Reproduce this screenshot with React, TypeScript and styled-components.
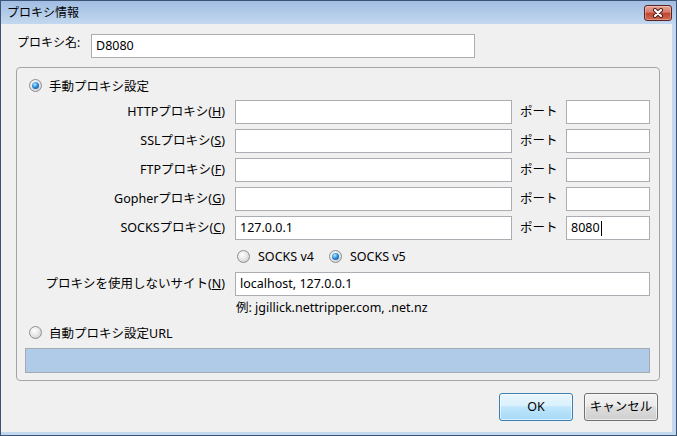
import React from 'react';
import styled, { createGlobalStyle } from 'styled-components';

const GlobalStyle = createGlobalStyle`
  body {
    margin: 0;
    background: #ffffff;
    font-family: "Noto Sans", "Noto Sans CJK JP", sans-serif;
    font-size: 12.5px;
    color: #000000;
  }
`;

const Window = styled.div`
  width: 677px;
  height: 436px;
  box-sizing: border-box;
  border: 1px solid #3b5475;
  background: #c3d8ef;
  display: flex;
  flex-direction: column;
  overflow: hidden;
`;

const TitleBar = styled.div`
  height: 23px;
  flex: none;
  display: flex;
  align-items: flex-start;
  justify-content: space-between;
  padding: 4px 4px 0 6px;
  box-sizing: border-box;
  background: linear-gradient(#a1bde2, #c3d8ef);
`;

const TitleText = styled.span`
  line-height: 16px;
  font-size: 12px;
`;

const CloseButton = styled.div`
  width: 28px;
  height: 16px;
  box-sizing: border-box;
  border: 1px solid #5b2222;
  border-radius: 3px;
  background: linear-gradient(#e7a597 0%, #d4796a 45%, #c04630 52%, #cf6a55 100%);
  box-shadow: inset 0 0 0 1px rgba(255, 255, 255, 0.3);
  display: flex;
  align-items: center;
  justify-content: center;
`;

const Client = styled.div`
  flex: 1;
  margin: 0 4px 3px 0;
  background: #f0f0f0;
  display: flex;
  flex-direction: column;
`;

const NameRow = styled.div`
  display: flex;
  align-items: flex-start;
  padding: 10px 0 0 16px;
`;

const NameLabel = styled.span`
  width: 74px;
  line-height: 17px;
  font-size: 12px;
`;

const TextBox = styled.div<{ $width?: number }>`
  width: ${({ $width }) => ($width ? `${$width}px` : 'auto')};
  height: 24px;
  box-sizing: border-box;
  border: 1px solid #abadb3;
  background: #ffffff;
  padding: 0 4px;
  display: flex;
  align-items: center;
  line-height: 16px;
  white-space: nowrap;
`;

const Caret = styled.span`
  display: inline-block;
  width: 1px;
  height: 15px;
  background: #000000;
  margin-left: 1px;
`;

const GroupBox = styled.div`
  margin: 9px 0 0 15px;
  width: 644px;
  height: 314px;
  box-sizing: border-box;
  border: 1px solid #a5a5a5;
  border-radius: 4px;
  padding-top: 8px;
  display: flex;
  flex-direction: column;
`;

const RadioRow = styled.label<{ $indent: number; $top?: number }>`
  display: flex;
  align-items: center;
  gap: 7px;
  height: 18px;
  padding-left: ${({ $indent }) => $indent}px;
  margin-top: ${({ $top }) => $top ?? 0}px;
`;

const RadioDot = styled.span<{ $checked?: boolean }>`
  width: 13px;
  height: 13px;
  flex: none;
  box-sizing: border-box;
  border-radius: 50%;
  border: 1px solid #8d8f91;
  background: radial-gradient(circle at 40% 35%, #ffffff 0%, #e6e6e6 50%, #c2c2c2 100%);
  display: inline-flex;
  align-items: center;
  justify-content: center;

  &::after {
    content: '';
    width: 7px;
    height: 7px;
    border-radius: 50%;
    background: ${({ $checked }) =>
      $checked
        ? 'radial-gradient(circle at 40% 35%, #b8ecff 0%, #2f8fdc 45%, #0b3c7a 100%)'
        : 'transparent'};
  }
`;

const ProxyGrid = styled.div`
  margin-top: 6px;
  display: grid;
  grid-template-columns: 218px 277px 54px 84px;
  grid-auto-rows: 24px;
  row-gap: 5px;
  align-items: center;
`;

const FieldLabel = styled.span`
  text-align: right;
  padding-right: 10px;
  line-height: 16px;
  white-space: nowrap;
`;

const PortLabel = styled.span`
  padding-left: 8px;
  line-height: 16px;
`;

const SocksRow = styled.div`
  display: flex;
  align-items: center;
  gap: 15px;
  height: 18px;
  margin-top: 7px;
  padding-left: 220px;
`;

const RadioOption = styled.label`
  display: flex;
  align-items: center;
  gap: 8px;
`;

const NoProxyRow = styled.div`
  display: grid;
  grid-template-columns: 218px 415px;
  align-items: center;
  margin-top: 7px;
`;

const ExampleText = styled.div`
  margin-top: 4px;
  height: 16px;
  line-height: 16px;
  padding-left: 219px;
`;

const UrlBar = styled.div`
  margin: 7px 9px 0 8px;
  height: 25px;
  box-sizing: border-box;
  border: 1px solid #a3aab3;
  background: #b0cbe8;
`;

const ButtonRow = styled.div`
  display: flex;
  justify-content: flex-end;
  gap: 11px;
  margin-top: 12px;
  padding-right: 14px;
`;

const DialogButton = styled.div<{ $default?: boolean }>`
  width: 74px;
  height: 28px;
  box-sizing: border-box;
  border-radius: 3px;
  border: 1px solid ${({ $default }) => ($default ? '#3c7fb1' : '#707070')};
  background: ${({ $default }) =>
    $default
      ? 'linear-gradient(#eaf6fd 0%, #d9f0fc 45%, #bee6fd 50%, #a7d9f5 100%)'
      : 'linear-gradient(#f2f2f2 0%, #ebebeb 45%, #dddddd 50%, #cfcfcf 100%)'};
  box-shadow: inset 0 0 0 1px rgba(255, 255, 255, 0.6);
  display: flex;
  align-items: center;
  justify-content: center;
  line-height: 16px;
`;

const CloseGlyph = () => (
  <svg width="12" height="10" viewBox="0 0 12 10">
    <path d="M3 2 L9 8 M9 2 L3 8" stroke="#4a1812" strokeWidth="4" strokeLinecap="round" />
    <path d="M3 2 L9 8 M9 2 L3 8" stroke="#ffffff" strokeWidth="2.2" strokeLinecap="round" />
  </svg>
);

const rows = [
  { name: 'HTTP', key: 'H', host: '', port: '' },
  { name: 'SSL', key: 'S', host: '', port: '' },
  { name: 'FTP', key: 'F', host: '', port: '' },
  { name: 'Gopher', key: 'G', host: '', port: '' },
  { name: 'SOCKS', key: 'C', host: '127.0.0.1', port: '8080' },
];

export default function App() {
  return (
    <>
      <GlobalStyle />
      <Window>
        <TitleBar>
          <TitleText>プロキシ情報</TitleText>
          <CloseButton>
            <CloseGlyph />
          </CloseButton>
        </TitleBar>
        <Client>
          <NameRow>
            <NameLabel>プロキシ名:</NameLabel>
            <TextBox $width={384}>D8080</TextBox>
          </NameRow>

          <GroupBox>
            <RadioRow $indent={12}>
              <RadioDot $checked />
              <span>手動プロキシ設定</span>
            </RadioRow>

            <ProxyGrid>
              {rows.map((r) => (
                <React.Fragment key={r.key}>
                  <FieldLabel>
                    {r.name}プロキシ(<u>{r.key}</u>)
                  </FieldLabel>
                  <TextBox>{r.host}</TextBox>
                  <PortLabel>ポート</PortLabel>
                  <TextBox>
                    {r.port}
                    {r.port && <Caret />}
                  </TextBox>
                </React.Fragment>
              ))}
            </ProxyGrid>

            <SocksRow>
              <RadioOption>
                <RadioDot />
                <span>SOCKS v4</span>
              </RadioOption>
              <RadioOption>
                <RadioDot $checked />
                <span>SOCKS v5</span>
              </RadioOption>
            </SocksRow>

            <NoProxyRow>
              <FieldLabel>
                プロキシを使用しないサイト(<u>N</u>)
              </FieldLabel>
              <TextBox>localhost, 127.0.0.1</TextBox>
            </NoProxyRow>

            <ExampleText>例: jgillick.nettripper.com, .net.nz</ExampleText>

            <RadioRow $indent={12} $top={7}>
              <RadioDot />
              <span>自動プロキシ設定URL</span>
            </RadioRow>

            <UrlBar />
          </GroupBox>

          <ButtonRow>
            <DialogButton $default>OK</DialogButton>
            <DialogButton>キャンセル</DialogButton>
          </ButtonRow>
        </Client>
      </Window>
    </>
  );
}
